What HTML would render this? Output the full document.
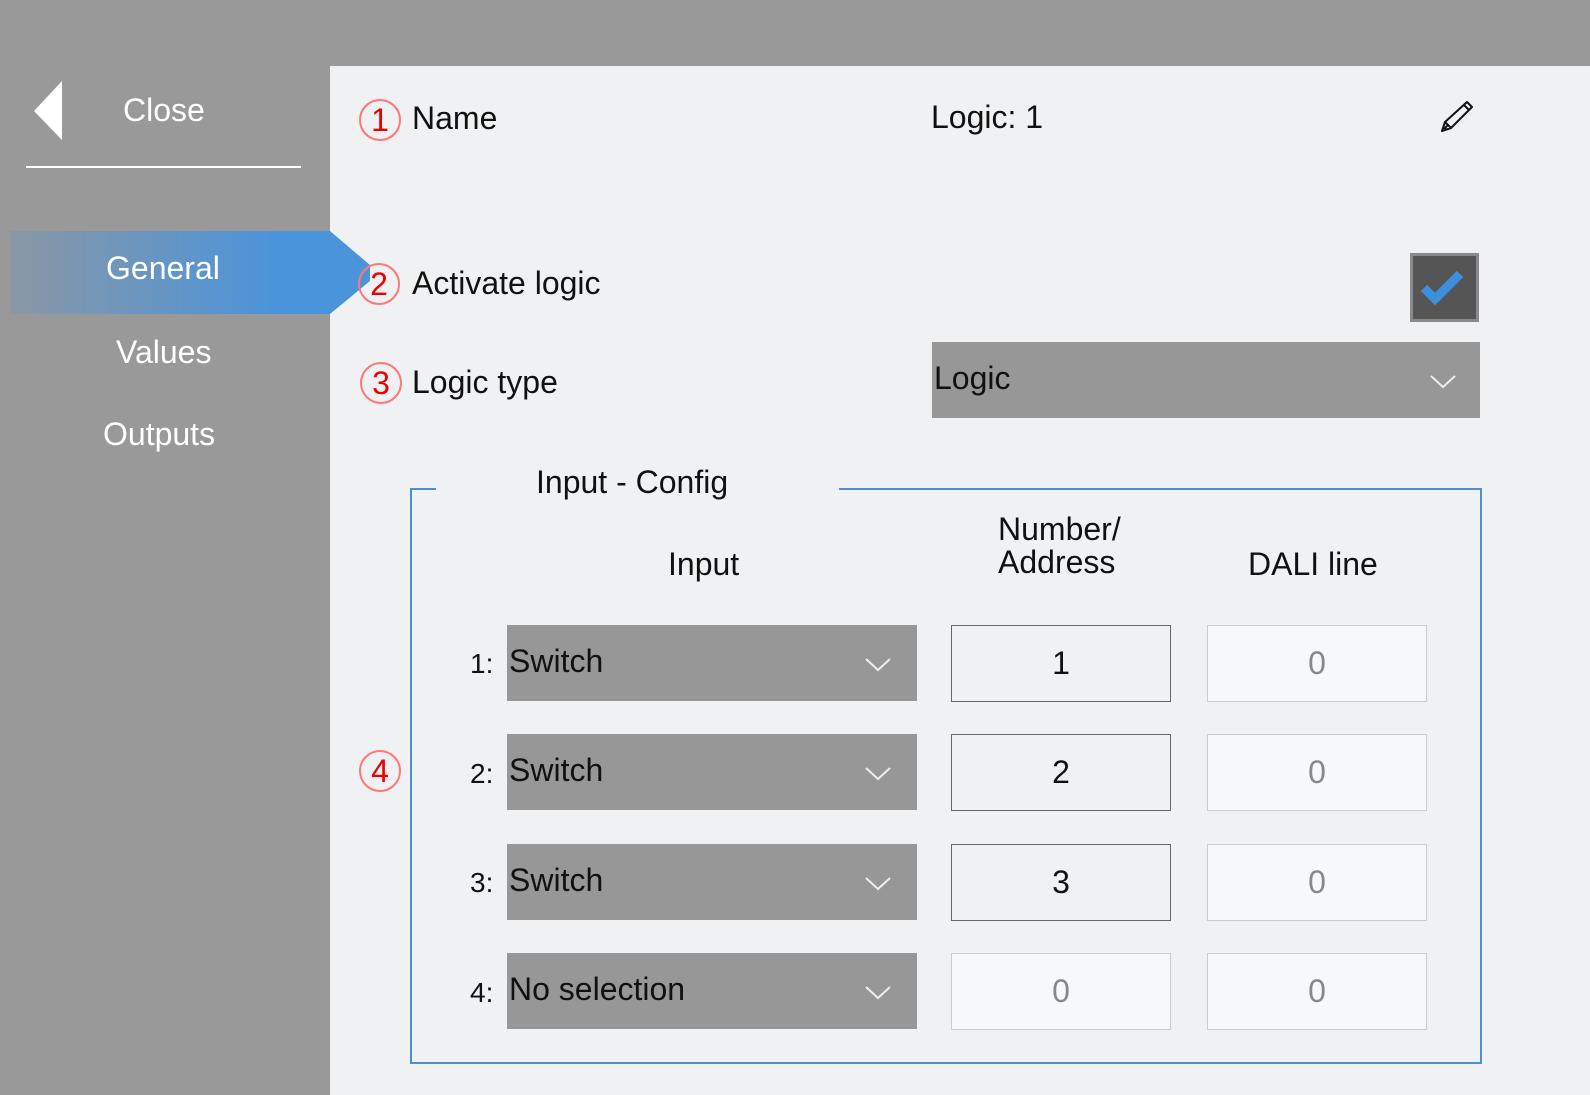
<!DOCTYPE html>
<html><head><style>
*{margin:0;padding:0;box-sizing:border-box}
body{width:1590px;height:1095px;background:#999;position:relative;overflow:hidden;font-family:"Liberation Sans",sans-serif;}
.a{position:absolute}
.t{position:absolute;font-size:32px;line-height:1;color:#111;white-space:nowrap}
.w{color:#fff}
.r{font-size:28px}
.c{position:absolute;width:42px;height:42px;border:2px solid #f77;border-radius:50%;color:#e00;font-size:32px;line-height:38px;text-align:center}
.dd{position:absolute;background:#979797;height:76px}
.dd span{position:absolute;left:2px;top:20px;font-size:32px;line-height:1;color:#111}
.dd svg{position:absolute;top:32px}
.bx{position:absolute;width:220px;height:77px;border:1.5px solid #666;background:#f0f1f3;font-size:32px;line-height:74px;text-align:center;color:#111}
.bx.o{border-color:#ccc;background:#f7f8f9;color:#888}
</style></head><body>
<div class="a" style="left:330px;top:66px;width:1260px;height:1029px;background:#f0f1f3"></div>
<svg class="a" style="left:34px;top:81px" width="30" height="60"><polygon points="28,0 28,59 0,30" fill="#fff"/></svg>
<div class="t w" style="left:123px;top:94px">Close</div>
<div class="a" style="left:26px;top:166px;width:275px;height:2px;background:#fff"></div>
<svg class="a" style="left:10px;top:231px" width="362" height="84"><defs><linearGradient id="g" x1="0" x2="1"><stop offset="0" stop-color="#8a97a5"/><stop offset="0.75" stop-color="#4a94dc"/><stop offset="1" stop-color="#4a94dc"/></linearGradient></defs><polygon points="0,0 320,0 360,34 360,50 320,83 0,83" fill="url(#g)"/></svg>
<div class="t w" style="left:106px;top:252px">General</div>
<div class="t w" style="left:116px;top:336px">Values</div>
<div class="t w" style="left:103px;top:418px">Outputs</div>

<div class="c" style="left:359px;top:99px">1</div>
<div class="t" style="left:412px;top:102px">Name</div>
<div class="t" style="left:931px;top:101px">Logic: 1</div>
<svg class="a" style="left:1440px;top:99px" width="34" height="34" viewBox="0 0 34 34"><path d="M27 3 L32 8 L11 29 L2 32 L5 23 Z M5 23 L11 29 M24 6 L29 11 M8 26 L4 30" fill="none" stroke="#111" stroke-width="2" stroke-linejoin="round"/></svg>

<div class="c" style="left:358px;top:263px">2</div>
<div class="t" style="left:412px;top:267px">Activate logic</div>
<div class="a" style="left:1410px;top:253px;width:69px;height:69px;background:#555;border:3px solid #8a8a8a"></div>
<svg class="a" style="left:1420px;top:264px" width="50" height="44"><path d="M4 24 L15 35 L40 10" fill="none" stroke="#3b8fdc" stroke-width="9"/></svg>

<div class="c" style="left:360px;top:362px">3</div>
<div class="t" style="left:412px;top:366px">Logic type</div>
<div class="dd" style="left:932px;top:342px;width:548px"><span>Logic</span><svg style="left:498px" width="26" height="16"><path d="M1 2 L13 13 L25 2" fill="none" stroke="#eee" stroke-width="2"/></svg></div>

<div class="a" style="left:410px;top:488px;width:1072px;height:576px;border:2px solid #4a90d9"></div>
<div class="a" style="left:436px;top:480px;width:403px;height:14px;background:#f0f1f3"></div>
<div class="t" style="left:536px;top:466px">Input - Config</div>
<div class="t" style="left:668px;top:548px">Input</div>
<div class="t" style="left:998px;top:513px">Number/<br><span style="position:relative;left:0px;top:1px">Address</span></div>
<div class="t" style="left:1248px;top:548px">DALI line</div>

<div class="c" style="left:359px;top:750px">4</div>

<div class="t r" style="left:470px;top:650px">1:</div>
<div class="dd" style="left:507px;top:625px;width:410px"><span>Switch</span><svg style="left:358px" width="26" height="16"><path d="M1 2 L13 13 L25 2" fill="none" stroke="#eee" stroke-width="2"/></svg></div>
<div class="bx" style="left:951px;top:625px">1</div>
<div class="bx o" style="left:1207px;top:625px">0</div>

<div class="t r" style="left:470px;top:760px">2:</div>
<div class="dd" style="left:507px;top:734px;width:410px"><span>Switch</span><svg style="left:358px" width="26" height="16"><path d="M1 2 L13 13 L25 2" fill="none" stroke="#eee" stroke-width="2"/></svg></div>
<div class="bx" style="left:951px;top:734px">2</div>
<div class="bx o" style="left:1207px;top:734px">0</div>

<div class="t r" style="left:470px;top:869px">3:</div>
<div class="dd" style="left:507px;top:844px;width:410px"><span>Switch</span><svg style="left:358px" width="26" height="16"><path d="M1 2 L13 13 L25 2" fill="none" stroke="#eee" stroke-width="2"/></svg></div>
<div class="bx" style="left:951px;top:844px">3</div>
<div class="bx o" style="left:1207px;top:844px">0</div>

<div class="t r" style="left:470px;top:979px">4:</div>
<div class="dd" style="left:507px;top:953px;width:410px"><span>No selection</span><svg style="left:358px" width="26" height="16"><path d="M1 2 L13 13 L25 2" fill="none" stroke="#eee" stroke-width="2"/></svg></div>
<div class="bx o" style="left:951px;top:953px">0</div>
<div class="bx o" style="left:1207px;top:953px">0</div>
</body></html>
